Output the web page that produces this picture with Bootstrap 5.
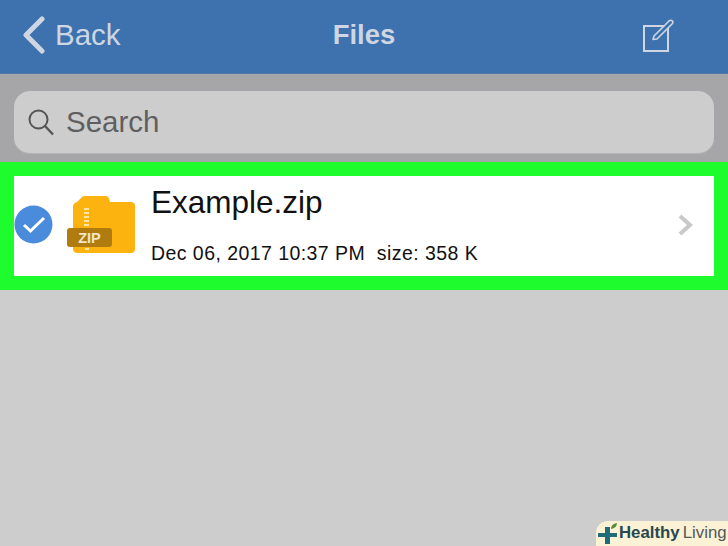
<!DOCTYPE html>
<html lang="en">
<head>
<meta charset="utf-8">
<title>Files</title>
<link href="https://cdn.jsdelivr.net/npm/bootstrap@5.3.0/dist/css/bootstrap.min.css" rel="stylesheet">
<style>
html,body{height:100%;overflow:hidden}
body{background:#cdcdcd;font-family:"Liberation Sans",Arial,sans-serif;width:728px;height:546px}
.shot{height:546px}
.topbar{height:74px;background:#3d72ae;color:#cdd6e2;padding:0 22px 3px 22px;border-bottom:1px solid #4f7aa9}
.back-txt{font-size:29.500px;margin-left:10px;line-height:1}
.title-txt{font-size:27.500px;font-weight:700;line-height:1}
.side{width:160px}
.editicon{margin-right:32px}
.searchband{height:88px;background:#a6a6a8;padding:17px 14px 8px}
.searchbox{height:63px;background:#cdcdcd;border-radius:16px;padding-left:14px;color:#5f5f61;font-size:29.500px;border-bottom:1px solid #b5b5b7}
.searchbox span{margin-left:12px;line-height:1}
.hilite{background:#1efc2d;padding:14px 14px;height:128px}
.rowbox{height:100px;background:#fff;padding-right:21px}
.fname{font-size:31.500px;line-height:1;color:#111;margin-top:11px}
.fmeta{font-size:19.500px;line-height:1;color:#111;margin-top:25px;white-space:pre;letter-spacing:.44px}
.txtcol{margin-left:15px}
.tick{margin-bottom:3px}
.chev{margin-bottom:2px}
.zipicon{margin-left:13px}
.ziplabel{font:700 14.500px "Liberation Sans",Arial,sans-serif;fill:#f3e6c4}
.wm{position:absolute;right:0;bottom:0;width:132px;height:25px;background:#fbf1d5;border-radius:12px 0 0 0;font-size:16.800px;line-height:1;color:#50585c;padding:0 0 0 2px}
.wm b{color:#27484f}
.wm span{white-space:nowrap;margin-left:1px;word-spacing:-1.500px}
</style>
</head>
<body>
<div class="shot position-relative d-flex flex-column">
  <header class="topbar d-flex align-items-center justify-content-between">
    <div class="side d-flex align-items-center">
      <svg width="23" height="38" viewBox="0 0 23 38" fill="none"><path d="M20 3 L4 19 L20 35" stroke="#cdd6e2" stroke-width="5" stroke-linecap="round" stroke-linejoin="round"/></svg>
      <span class="back-txt">Back</span>
    </div>
    <div class="title-txt">Files</div>
    <div class="side d-flex justify-content-end">
      <svg class="editicon" width="34" height="34" viewBox="0 0 34 34" fill="none"><rect x="4" y="8" width="24" height="25" stroke="#cdd6e2" stroke-width="2"/><path d="M13 21.500 L14 18 L29 3 Q31 1.500 32.500 3 Q33.500 4.500 32 6 L17 21 Z" fill="#3d72ae" stroke="#cdd6e2" stroke-width="1.600" stroke-linejoin="round"/></svg>
    </div>
  </header>
  <div class="searchband">
    <div class="searchbox d-flex align-items-center">
      <svg width="26" height="27" viewBox="0 0 26 27" fill="none"><circle cx="10.500" cy="10.500" r="9" stroke="#555" stroke-width="2"/><path d="M17 17 L25 25.500" stroke="#555" stroke-width="2.400"/></svg>
      <span>Search</span>
    </div>
  </div>
  <div class="hilite">
    <div class="rowbox d-flex align-items-center">
      <svg class="flex-shrink-0 tick" width="39" height="39" viewBox="0 0 39 39"><circle cx="19.500" cy="19.500" r="19" fill="#4b8bdb"/><path d="M10 20 L16.500 26 L30 13" fill="none" stroke="#fff" stroke-width="3"/></svg>
      <svg class="flex-shrink-0 zipicon" width="70" height="62" viewBox="0 0 70 62">
        <path d="M7 12 Q7 8 11 7 L16 2 Q17 1 19 1 H40 Q43 1 44 7 H65 Q69 7 69 11 V54 Q69 58 65 58 H12 Q7 58 7 54 Z" fill="#fdb30f"/>
        <path d="M18 14 H23 M18 18 H23 M18 22 H23 M18 26 H23 M18 30 H23 M19 54 H23" stroke="#fde5a5" stroke-width="2"/>
        <rect x="1" y="33" width="45" height="19" rx="3" fill="#b07c10"/>
        <text class="ziplabel" x="23.500" y="47.500" text-anchor="middle">ZIP</text>
      </svg>
      <div class="txtcol flex-grow-1 align-self-start">
        <div class="fname">Example.zip</div>
        <div class="fmeta">Dec 06, 2017 10:37 PM  size: 358 K</div>
      </div>
      <svg class="flex-shrink-0 chev" width="15" height="22" viewBox="0 0 15 22"><path d="M2 2 L12 11 L2 20" fill="none" stroke="#c9c9c9" stroke-width="4"/></svg>
    </div>
  </div>
  <div class="wm d-flex align-items-center">
    <svg class="flex-shrink-0" width="20" height="22" viewBox="0 0 20 22"><path d="M0 10 H7 V4 H12 V10 H19 V14 H12 V21 H7 V14 H0 Z" fill="#1f6b78"/><path d="M13 6 Q13 1 19 0 Q19 5 13 6 Z" fill="#5d8a38"/></svg>
    <span><b>Healthy</b> Living</span>
  </div>
</div>
</body>
</html>
